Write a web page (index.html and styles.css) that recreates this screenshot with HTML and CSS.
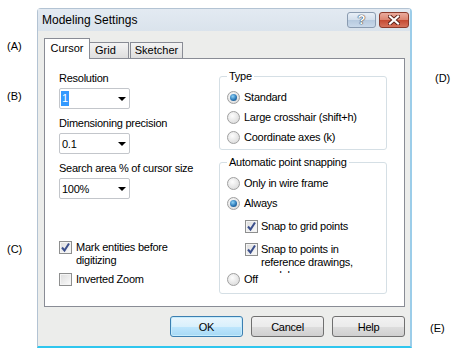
FILE: index.html
```html
<!DOCTYPE html>
<html lang="en">
<head>
  <meta charset="UTF-8" />
  <title>Modeling Settings</title>
  <link rel="stylesheet" href="styles.css">
</head>
<body>
  <div class="page">
    <div class="notes notes-left">
      <span class="note note-a">(A)</span>
      <span class="note note-b">(B)</span>
      <span class="note note-c">(C)</span>
    </div>

    <div class="window">
      <div class="titlebar">
        <span class="title">Modeling Settings</span>
        <div class="title-buttons">
          <span class="tbtn help-btn">?</span>
          <span class="tbtn close-btn">
            <svg width="12" height="10" viewBox="0 0 12 10">
              <path d="M2 1.5 L10 8.5 M10 1.5 L2 8.5" stroke="#5a2018" stroke-width="4" stroke-linecap="square" fill="none"/>
              <path d="M2 1.5 L10 8.5 M10 1.5 L2 8.5" stroke="#fff" stroke-width="2.2" stroke-linecap="square" fill="none"/>
            </svg>
          </span>
        </div>
      </div>

      <div class="dialog">
        <div class="tabs">
          <span class="tab tab-cursor active">Cursor</span>
          <span class="tab tab-grid">Grid</span>
          <span class="tab tab-sketcher">Sketcher</span>
        </div>

        <div class="panel">
          <div class="col-left">
            <div class="field">
              <label>Resolution</label>
              <div class="combo"><span class="value selected">1</span><span class="arrow"></span></div>
            </div>
            <div class="field">
              <label>Dimensioning precision</label>
              <div class="combo"><span class="value">0.1</span><span class="arrow"></span></div>
            </div>
            <div class="field">
              <label>Search area % of cursor size</label>
              <div class="combo"><span class="value">100%</span><span class="arrow"></span></div>
            </div>

            <div class="check-list">
              <div class="check checked">
                <span class="box"><svg width="11" height="11" viewBox="0 0 11 11"><path d="M2 5.5 L4.5 8.5 L9 1.5" stroke="#3b4f8c" stroke-width="2" fill="none"/></svg></span>
                <span class="check-text">Mark entities before<br>digitizing</span>
              </div>
              <div class="check inverted">
                <span class="box"></span>
                <span class="check-text">Inverted Zoom</span>
              </div>
            </div>
          </div>

          <div class="col-right">
            <fieldset class="group">
              <legend>Type</legend>
              <div class="radio checked"><span class="dot"></span>Standard</div>
              <div class="radio"><span class="dot"></span>Large crosshair (shift+h)</div>
              <div class="radio"><span class="dot"></span>Coordinate axes (k)</div>
            </fieldset>

            <fieldset class="group snap-group">
              <legend>Automatic point snapping</legend>
              <div class="radio"><span class="dot"></span>Only in wire frame</div>
              <div class="radio checked"><span class="dot"></span>Always</div>
              <div class="check sub-check grid-check">
                <span class="box"><svg width="11" height="11" viewBox="0 0 11 11"><path d="M2 5.5 L4.5 8.5 L9 1.5" stroke="#3b4f8c" stroke-width="2" fill="none"/></svg></span>
                <span class="check-text">Snap to grid points</span>
              </div>
              <div class="check sub-check points-check">
                <span class="box"><svg width="11" height="11" viewBox="0 0 11 11"><path d="M2 5.5 L4.5 8.5 L9 1.5" stroke="#3b4f8c" stroke-width="2" fill="none"/></svg></span>
                <span class="check-text">Snap to points in<br>reference drawings,<br>models</span>
              </div>
              <div class="radio off-radio"><span class="dot"></span>Off</div>
            </fieldset>
          </div>
        </div>

        <div class="buttons">
          <button class="btn default">OK</button>
          <button class="btn">Cancel</button>
          <button class="btn">Help</button>
        </div>
      </div>
    </div>

    <div class="notes notes-right">
      <span class="note note-d">(D)</span>
      <span class="note note-e">(E)</span>
    </div>
  </div>
</body>
</html>
```

FILE: styles.css
```css
body {
  margin: 0;
  background: #fff;
  font-family: "Liberation Sans", Arial, sans-serif;
  font-size: 11px;
  color: #000;
}

.page {
  display: flex;
  width: 456px;
  height: 349px;
}

/* annotation letters */
.notes {
  display: flex;
  flex-direction: column;
  align-items: flex-start;
}

.notes-left {
  width: 37px;
  flex: none;
  box-sizing: border-box;
  padding-left: 7px;
}

.notes-right {
  flex: 1;
}

.note {
  line-height: 14px;
}

.note-a { margin-top: 39px; }
.note-b { margin-top: 36px; }
.note-c { margin-top: 139px; }
.note-d { margin: 71px 0 0 23px; }
.note-e { margin: 236px 0 0 18px; }

/* window frame */
.window {
  flex: none;
  width: 375px;
  height: 340px;
  margin-top: 8px;
  box-sizing: border-box;
  border: 1px solid #b3c3d3;
  border-right: 2px solid #9ccde9;
  border-bottom: 2px solid #2fc6ee;
  border-radius: 4px 4px 0 0;
  display: flex;
  flex-direction: column;
  background: #ecedeb;
}

.titlebar {
  height: 22px;
  flex: none;
  display: flex;
  align-items: center;
  justify-content: space-between;
  padding-left: 4px;
  background: linear-gradient(#e3eaf2, #dae3ec);
}

.title {
  font-size: 12px;
  color: #000;
}

.title-buttons {
  display: flex;
  gap: 3px;
  margin-right: 1px;
}

.tbtn {
  height: 16px;
  box-sizing: border-box;
  border-radius: 3px;
  display: flex;
  align-items: center;
  justify-content: center;
}

.help-btn {
  width: 29px;
  border: 1px solid #8a9bb0;
  background: linear-gradient(#e8eff7 0%, #d3dfec 48%, #b7cadf 52%, #c9d9ea 100%);
  color: #fff;
  font-weight: bold;
  font-size: 13px;
  line-height: 14px;
  text-shadow: 0 0 1px #34404f, 0 0 1px #34404f, 0 0 1px #34404f;
}

.close-btn {
  width: 30px;
  border: 1px solid #8b3a2b;
  background: linear-gradient(#eaab9d 0%, #dc8571 48%, #c54a32 52%, #d6735d 100%);
}

/* dialog body */
.dialog {
  flex: 1;
  display: flex;
  flex-direction: column;
  padding: 7px 5px 0 6px;
}

.tabs {
  height: 20px;
  display: flex;
  align-items: flex-end;
  position: relative;
  z-index: 1;
}

.tab {
  height: 16px;
  box-sizing: border-box;
  border: 1px solid #898c95;
  border-bottom: none;
  background: linear-gradient(#f4f4f4, #dedede);
  line-height: 15px;
  text-align: center;
}

.tab.active {
  height: 21px;
  margin-bottom: -1px;
  background: #fff;
  line-height: 19px;
}

.tab-cursor { width: 46px; }
.tab-grid { width: 40px; margin-left: -1px; text-align: left; padding-left: 5px; }
.tab-sketcher { width: 53px; margin-left: 1px; }

.panel {
  height: 249px;
  box-sizing: border-box;
  border: 1px solid #898c95;
  background: #fff;
  display: grid;
  grid-template-columns: 160px 168px;
  align-items: start;
  padding: 11px 17px 0 14px;
  letter-spacing: -0.25px;
}

.col-left {
  padding-top: 2px;
}

.field + .field {
  margin-top: 8px;
}

.field label {
  display: block;
  line-height: 13px;
}

.combo {
  margin-top: 3px;
  width: 71px;
  height: 21px;
  box-sizing: border-box;
  border: 1px solid #c3c6cb;
  border-radius: 2px;
  display: flex;
  align-items: center;
  padding-left: 2px;
}

.selected {
  background: #3399ff;
  color: #fff;
  padding: 0 1px;
  margin-left: -1px;
  line-height: 15px;
}

.arrow {
  margin-left: auto;
  margin-right: 3px;
  width: 0;
  height: 0;
  border-left: 4px solid transparent;
  border-right: 4px solid transparent;
  border-top: 4px solid #000;
}

/* checkboxes */
.check-list {
  margin-top: 42px;
}

.check {
  display: flex;
  align-items: flex-start;
  gap: 4px;
  line-height: 13px;
}

.check.inverted {
  margin-top: 6px;
}

.box {
  flex: none;
  width: 13px;
  height: 13px;
  box-sizing: border-box;
  border: 1px solid #8e8f8f;
  background: linear-gradient(135deg, #dcdcdc, #fbfbfb);
  box-shadow: inset 0 0 0 1px #f4f4f4;
  display: flex;
  align-items: center;
  justify-content: center;
}

/* group boxes */
.group {
  margin: 0;
  min-width: 0;
  padding: 4px 6px 2px 7px;
  border: 1px solid #d5dfe5;
  border-radius: 3px;
}

.group legend {
  padding: 0 2px;
  line-height: 13px;
}

.snap-group {
  margin-top: 6px;
  padding-bottom: 4px;
}

.radio {
  height: 20px;
  display: flex;
  align-items: center;
  gap: 4px;
}

.dot {
  flex: none;
  width: 13px;
  height: 13px;
  box-sizing: border-box;
  border-radius: 50%;
  border: 1px solid #a0a0a0;
  background: radial-gradient(circle at 40% 35%, #fdfdfd, #d4d4d4);
  display: flex;
  align-items: center;
  justify-content: center;
}

.radio.checked .dot::after {
  content: "";
  width: 7px;
  height: 7px;
  border-radius: 50%;
  background: radial-gradient(circle at 40% 35%, #8fd3f7 0%, #2b79b8 55%, #143f6b 100%);
}

.sub-check {
  margin-left: 18px;
  gap: 3px;
}

.grid-check {
  margin-top: 7px;
}

.points-check {
  margin-top: 10px;
  height: 30px;
  overflow: hidden;
}

.off-radio {
  margin-top: -4px;
}

/* bottom buttons */
.buttons {
  display: flex;
  justify-content: flex-end;
  gap: 8px;
  margin-top: 9px;
}

.btn {
  width: 73px;
  height: 21px;
  box-sizing: border-box;
  border: 1px solid #707070;
  border-radius: 3px;
  background: linear-gradient(#f2f2f2 0%, #ebebeb 50%, #dddddd 51%, #cfcfcf 100%);
  font-family: inherit;
  font-size: 11px;
  letter-spacing: -0.25px;
  color: #000;
  padding: 0;
}

.btn.default {
  border-color: #3c7fb1;
  background: linear-gradient(#eaf6fd 0%, #d9f0fc 50%, #bee6fd 51%, #a7d9f5 100%);
  box-shadow: inset 0 0 0 1px #c6ecfc;
}
```
